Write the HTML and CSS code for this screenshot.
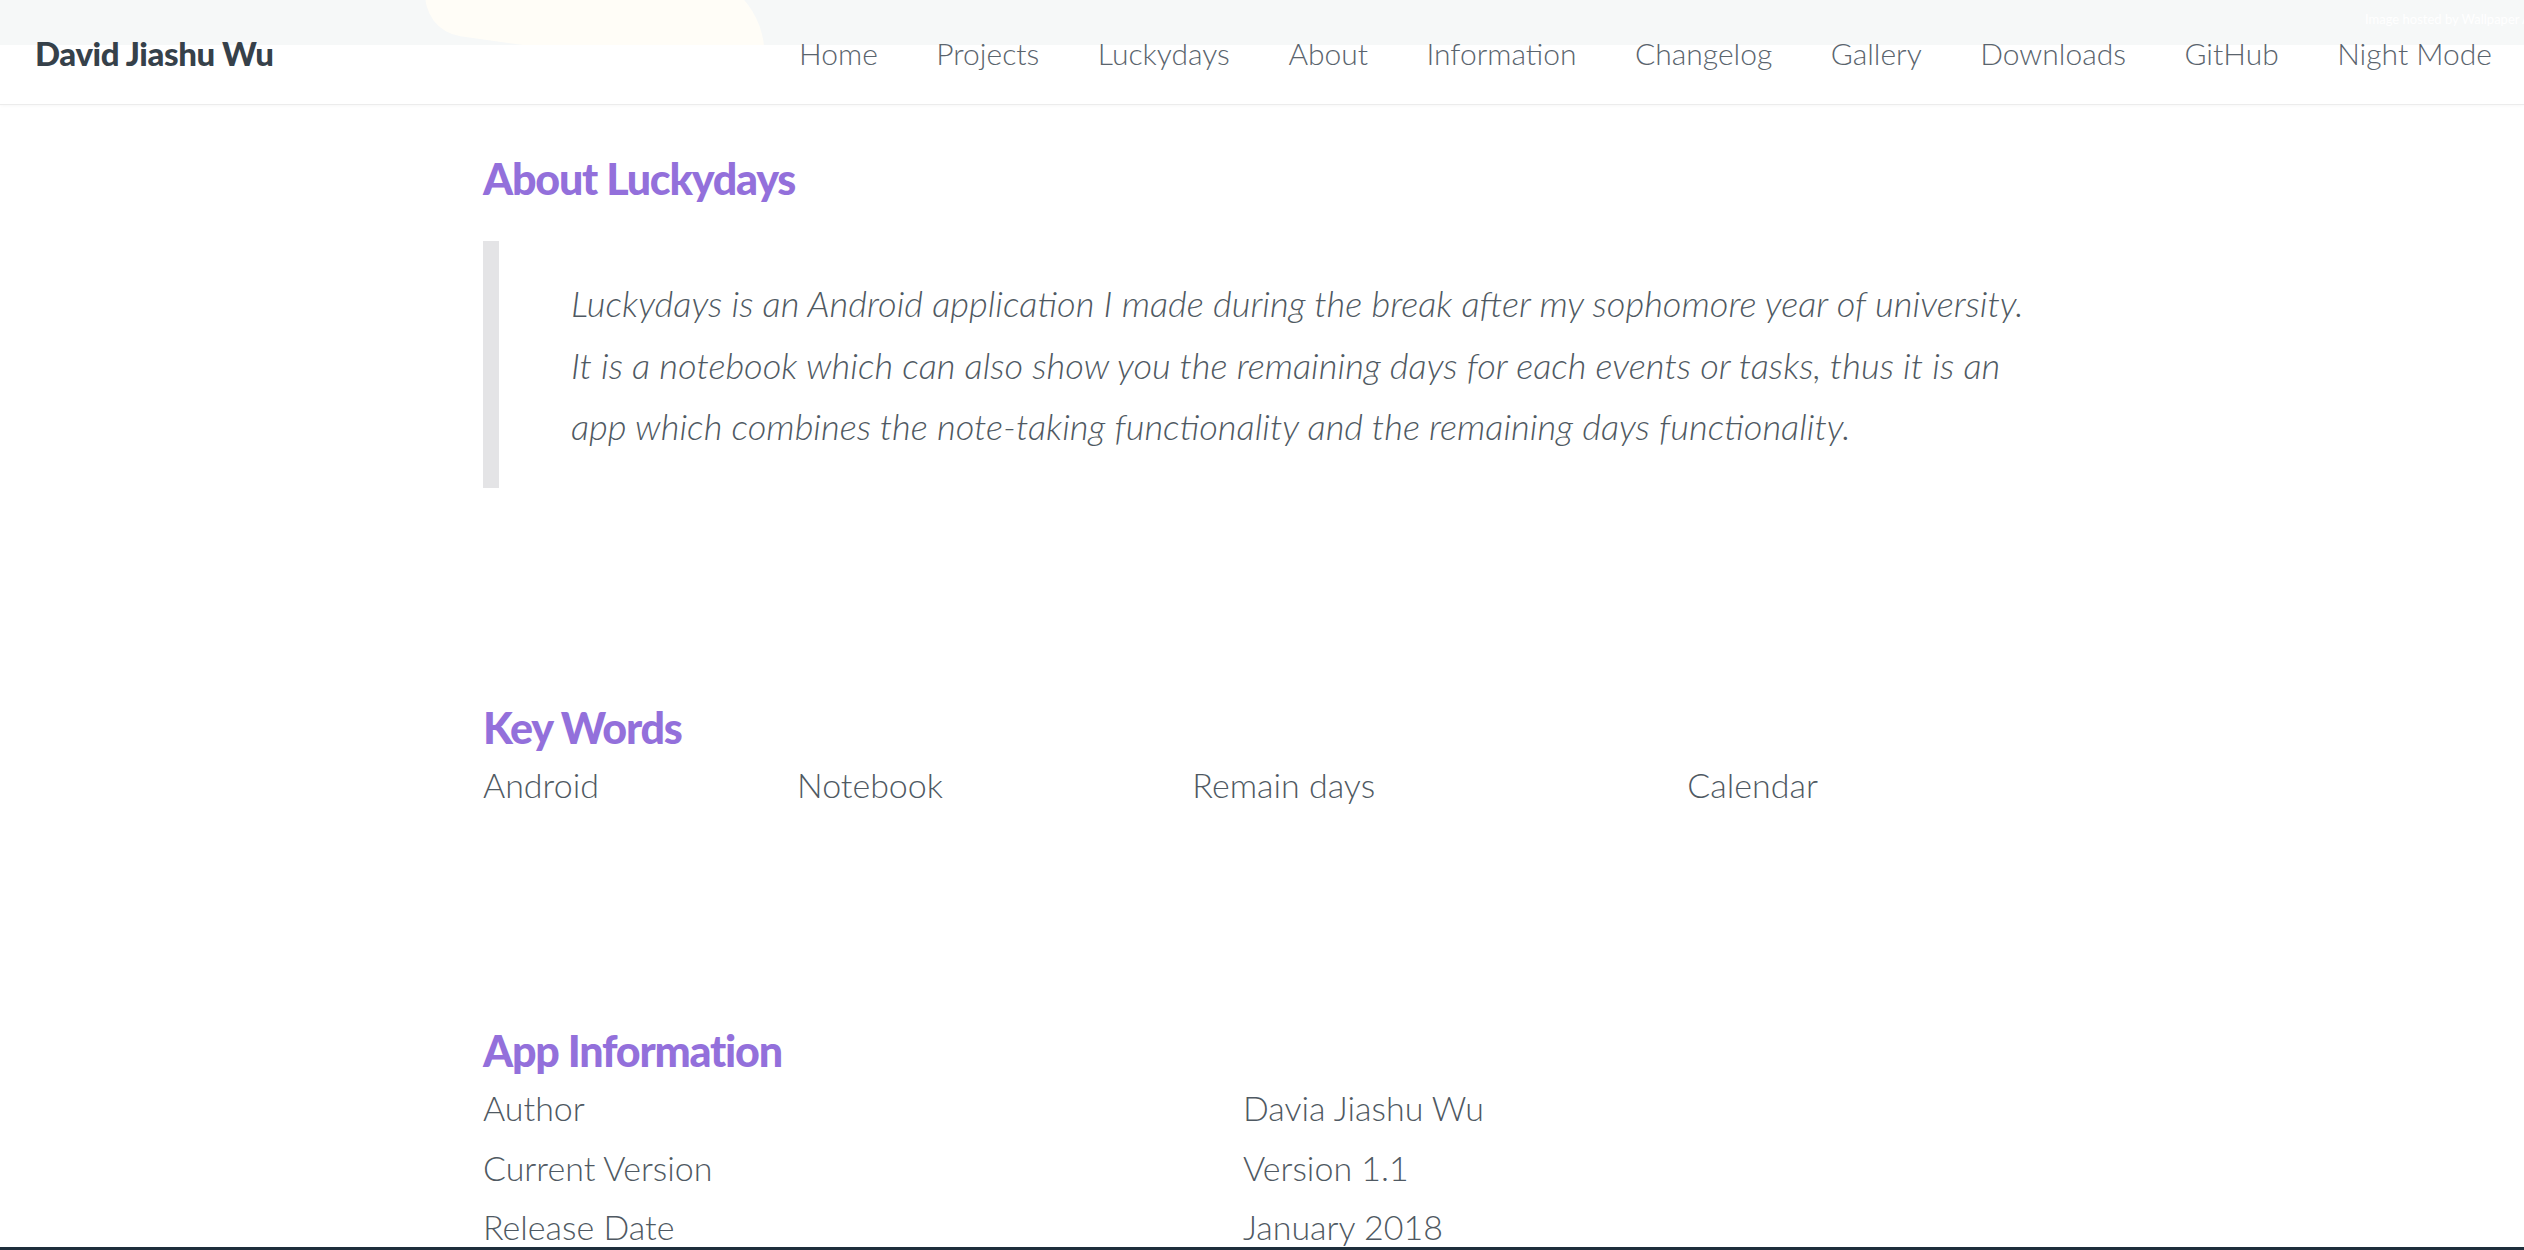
FILE: index.html
```html
<!DOCTYPE html>
<html lang="en">
<head>
<meta charset="utf-8">
<title>Luckydays - David Jiashu Wu</title>
<link rel="stylesheet" href="styles.css">
</head>
<body>
<header class="site-header">
  <div class="banner">
    <div class="banner-glow"></div>
    <span class="banner-credit">Image hosted by Wallpaper Abyss</span>
  </div>
  <nav class="topbar">
    <a class="brand" href="#">David Jiashu Wu</a>
    <ul class="menu">
      <li><a href="#">Home</a></li>
      <li><a href="#">Projects</a></li>
      <li><a href="#">Luckydays</a></li>
      <li><a href="#">About</a></li>
      <li><a href="#">Information</a></li>
      <li><a href="#">Changelog</a></li>
      <li><a href="#">Gallery</a></li>
      <li><a href="#">Downloads</a></li>
      <li><a href="#">GitHub</a></li>
      <li><a href="#">Night Mode</a></li>
    </ul>
  </nav>
</header>

<main class="content">
  <section class="section section-about">
    <h2 class="section-title">About Luckydays</h2>
    <blockquote class="quote">
      <p>Luckydays is an Android application I made during the break after my sophomore year of university. It is a notebook which can also show you the remaining days for each events or tasks, thus it is an app which combines the note-taking functionality and the remaining days functionality.</p>
    </blockquote>
  </section>

  <section class="section section-keywords">
    <h2 class="section-title">Key Words</h2>
    <table class="info-table">
      <tr><td>Android</td><td>Notebook</td><td>Remain days</td><td>Calendar</td></tr>
    </table>
  </section>

  <section class="section section-info">
    <h2 class="section-title">App Information</h2>
    <table class="info-table">
      <tr><td>Author</td><td>Davia Jiashu Wu</td></tr>
      <tr><td>Current Version</td><td>Version 1.1</td></tr>
      <tr><td>Release Date</td><td>January 2018</td></tr>
    </table>
  </section>
</main>

<footer class="site-footer"></footer>
</body>
</html>
```

FILE: styles.css
```css
* { box-sizing: border-box; }

html, body {
  margin: 0;
  padding: 0;
  background: #ffffff;
}

body {
  font-family: "Lato", "Liberation Sans", sans-serif;
  font-weight: 300;
  color: #4f5962;
  overflow: hidden;
}

a { color: inherit; text-decoration: none; }

/* ---------- header ---------- */
.site-header {
  position: relative;
  height: 105px;
  background: linear-gradient(#f6f8f8 0, #f6f8f8 45px, #ffffff 45px);
  border-bottom: 1px solid #ececec;
  box-shadow: 0 1px 3px rgba(0, 0, 0, 0.03);
  overflow: hidden;
}

.banner {
  position: absolute;
  top: 0;
  left: 0;
  right: 0;
  height: 45px;
  overflow: hidden;
}

.banner-glow {
  position: absolute;
  left: 425px;
  top: -40px;
  width: 345px;
  height: 95px;
  background: #fffdf7;
  border-radius: 40px 120px 20px 60px;
  transform: rotate(8deg);
}

.banner-credit {
  position: absolute;
  left: 2365px;
  top: 11px;
  font-size: 13px;
  font-weight: 400;
  color: #ffffff;
  white-space: nowrap;
}

.topbar {
  position: relative;
  display: flex;
  justify-content: space-between;
  align-items: flex-start;
  padding: 30px 32px 0 35px;
}

.brand {
  font-weight: 900;
  font-size: 33px;
  line-height: 46px;
  letter-spacing: -0.4px;
  color: #36414a;
}

.menu {
  display: flex;
  gap: 58.5px;
  list-style: none;
  margin: 0;
  padding: 0;
}

.menu a {
  font-size: 30px;
  line-height: 46px;
  color: #5a646d;
}

/* ---------- content ---------- */
.content {
  width: 1558px;
  margin: 0 auto;
}

.section-title {
  margin: 0;
  font-size: 43px;
  line-height: 54px;
  font-weight: 900;
  letter-spacing: -1.2px;
  color: #9370db;
}

.section-about { padding-top: 47px; }
.section-keywords { padding-top: 213px; }
.section-info { padding-top: 210px; }

.quote {
  margin: 35px 0 0 0;
  padding: 32px 0 30px 72px;
  border-left: 16px solid #e4e4e6;
}

.quote p {
  margin: 0;
  font-style: italic;
  font-size: 36.3px;
  line-height: 61.5px;
}

.info-table {
  width: 100%;
  border-collapse: collapse;
}

.info-table td {
  padding: 0;
  font-size: 34px;
  line-height: 59.5px;
  white-space: nowrap;
}

.site-footer {
  position: fixed;
  left: 0;
  right: 0;
  bottom: 0;
  height: 3px;
  background: #1e2f3c;
}
```
